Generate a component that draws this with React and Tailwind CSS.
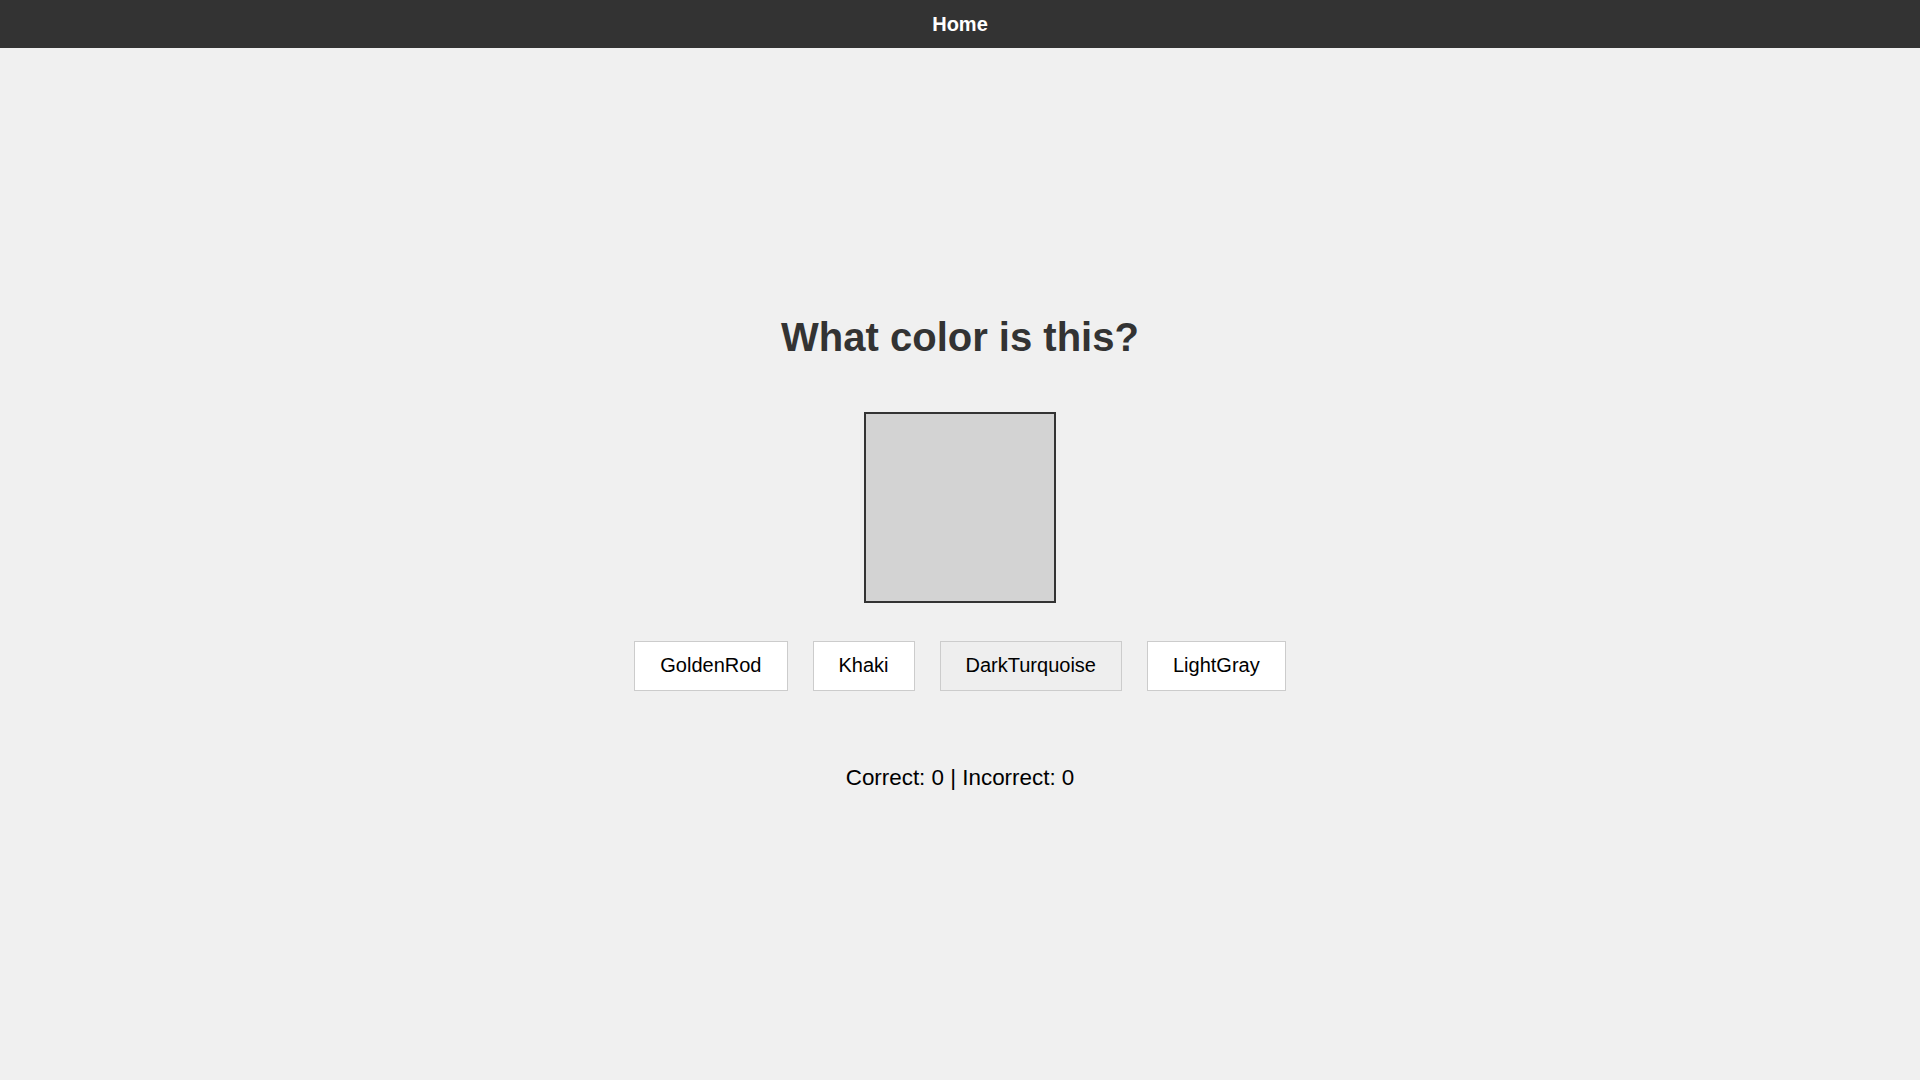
export default function App() {
  const options = ["GoldenRod", "Khaki", "DarkTurquoise", "LightGray"];
  return (
    <div
      className="min-h-screen bg-[#f0f0f0] flex flex-col"
      style={{ fontFamily: '"Liberation Sans", Arial, sans-serif' }}
    >
      <header className="h-12 bg-[#333333] flex items-center justify-center">
        <span className="text-white font-bold text-[20px] leading-[23px]">Home</span>
      </header>
      <main className="flex flex-col items-center">
        <h1 className="mt-[266px] text-[40px] leading-[46px] font-bold text-[#333333]">
          What color is this?
        </h1>
        <div className="mt-[52px] w-[192px] h-[191px] border-2 border-[#333333] bg-[#d3d3d3]" />
        <div className="mt-[38px] flex gap-[25px]">
          {options.map((o) => (
            <button
              key={o}
              className={
                "h-[50px] px-[25px] pb-[2px] border border-[#cccccc] text-[20px] leading-[23px] text-black " +
                (o === "DarkTurquoise" ? "bg-[#eeeeee]" : "bg-white")
              }
            >
              {o}
            </button>
          ))}
        </div>
        <p className="mt-[74px] text-[22.4px] leading-[26px] text-black">
          Correct: 0 | Incorrect: 0
        </p>
      </main>
    </div>
  );
}
